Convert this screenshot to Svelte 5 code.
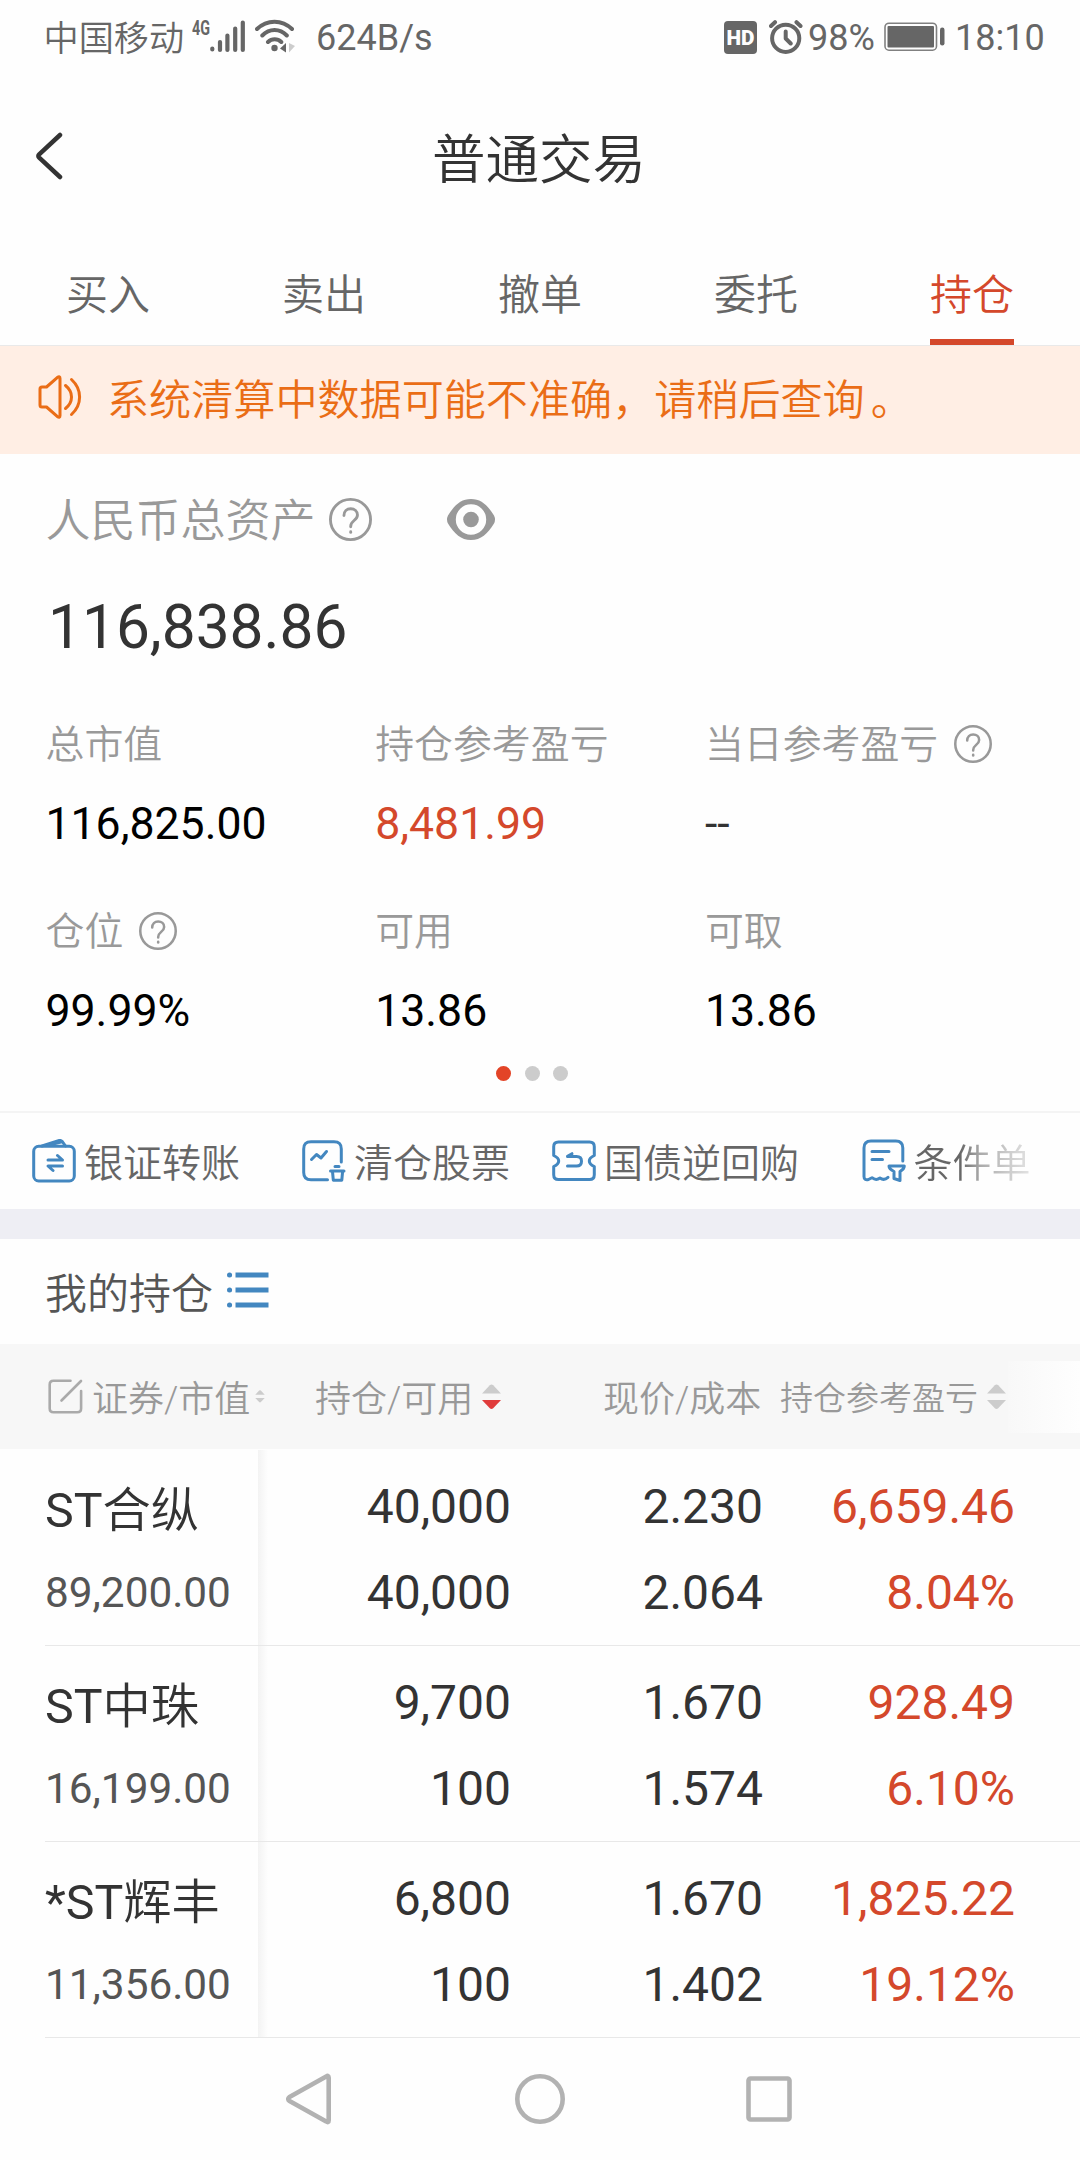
<script>
  const tabs = ['买入', '卖出', '撤单', '委托', '持仓'];
  const activeTab = '持仓';

  const metrics = [
    { label: '总市值', value: '116,825.00' },
    { label: '持仓参考盈亏', value: '8,481.99', tone: 'red' },
    { label: '当日参考盈亏', value: '--', tone: 'muted', help: true },
    { label: '仓位', value: '99.99%', help: true },
    { label: '可用', value: '13.86' },
    { label: '可取', value: '13.86' }
  ];

  const holdings = [
    { mark: 'ST', name: '合纵', worth: '89,200.00', held: '40,000', free: '40,000', price: '2.230', cost: '2.064', gain: '6,659.46', rate: '8.04%' },
    { mark: 'ST', name: '中珠', worth: '16,199.00', held: '9,700', free: '100', price: '1.670', cost: '1.574', gain: '928.49', rate: '6.10%' },
    { mark: '*ST', name: '辉丰', worth: '11,356.00', held: '6,800', free: '100', price: '1.670', cost: '1.402', gain: '1,825.22', rate: '19.12%' }
  ];
</script>

{#snippet help(size)}
  <svg class="help" width={size} height={size} viewBox="0 0 42 42">
    <circle cx="21" cy="21" r="19.6" />
    <path d="M14.6 17.2c0-4.2 2.8-6.7 6.6-6.7s6.6 2.5 6.6 6c0 5.4-6.6 5.6-6.6 11v.6" />
    <path d="M21.2 33v.6" />
  </svg>
{/snippet}

{#snippet sorter(kind)}
  <svg class="sorter {kind}" viewBox="0 0 19 26">
    <path d="M0 9.5 7.8 1.2q1.700-1.600 3.400 0L19 9.5z" />
    <path class="down" d="M0 16h19l-7.800 8.200q-1.700 1.600-3.400 0z" />
  </svg>
{/snippet}

<div class="screen">
  <div class="status">
    <span class="carrier">中国移动</span>
    <svg class="signal" width="54" height="36" viewBox="0 0 54 36">
      <text x="0" y="15.500" textLength="18" lengthAdjust="spacingAndGlyphs">4G</text>
      <path d="M20.300 31.500v-1M28 32V24M35.400 32V17.500M43.200 32V10.500M50.800 32V4.500" transform="translate(0 -1)" />
    </svg>
    <svg class="wifi" width="40" height="36" viewBox="0 0 40 36">
      <path class="arc" d="M2 10C12 .2 27 .2 37 10M7.300 16.500c7-7.200 17.500-7.200 24.500 0M13 23c3.800-3.600 9.500-3.600 13.300 0" />
      <circle cx="19.500" cy="29" r="3.200" />
      <path class="solid" d="M25 29.500 31 24v9.500z" />
      <path class="pale" d="M34 24v9.500l6-6.500z" />
    </svg>
    <span class="speed">624B/s</span>
    <svg class="hd" width="33" height="33" viewBox="0 0 33 33">
      <rect width="33" height="33" rx="4" />
      <text x="2.500" y="24" textLength="28" lengthAdjust="spacingAndGlyphs">HD</text>
    </svg>
    <svg class="alarm" width="34" height="34" viewBox="0 0 34 34">
      <circle cx="16.700" cy="18.300" r="13.600" />
      <path d="M16.700 11.500v7l5 5M2 6l4-3.800M31.500 6l-4-3.800" />
    </svg>
    <span class="charge">98%</span>
    <svg class="battery" width="61" height="30" viewBox="0 0 61 30">
      <rect class="shell" x="1" y="1.200" width="51.500" height="27" rx="4" />
      <rect x="3.500" y="4" width="46.500" height="21.500" rx="1" />
      <rect x="56" y="5.500" width="4.500" height="18" rx="2.200" />
    </svg>
    <span class="clock">18:10</span>
  </div>

  <header>
    <svg class="back" width="28" height="50" viewBox="0 0 28 50">
      <path d="M25 4 4.200 23.300q-1.700 1.700 0 3.400L25 46" />
    </svg>
    <h1>普通交易</h1>
  </header>

  <nav class="tabs">
    {#each tabs as tab}
      <div class="tab" class:active={tab === activeTab}><span>{tab}</span></div>
    {/each}
  </nav>

  <div class="notice">
    <svg width="44" height="44" viewBox="0 0 44 44">
      <path d="M2 14q0-2 2-2h4.500L19.500 2.300q2.500-1.600 2.500 1.200v37q0 2.800-2.500 1.200L8.500 32H4q-2 0-2-2z" />
      <path d="M27.500 10.500c8 6.500 8 16.500 0 23M33.500 4.500c10.800 10 10.800 25 0 35" />
    </svg>
    <span class="message">系统清算中数据可能不准确，请稍后查询<span class="stop">。</span></span>
  </div>

  <section class="summary">
    <div class="caption">
      <span>人民币总资产</span>
      {@render help(43)}
      <svg class="eye" width="48" height="41" viewBox="0 0 48 41">
        <path fill-rule="evenodd" d="M24 0C34 0 40.500 6 47 16.500q2 4 0 8C40.500 35 34 41 24 41S7.500 35 1 24.500q-2-4 0-8C7.500 6 14 0 24 0zM24 5.300a15.200 15.200 0 1 0 0 30.400a15.200 15.200 0 1 0 0-30.400z" />
        <circle cx="24" cy="20.500" r="7.800" />
      </svg>
    </div>
    <div class="total">116,838.86</div>
    <div class="metrics">
      {#each metrics as m}
        <div class="metric">
          <div class="label"><span>{m.label}</span>{#if m.help}{@render help(38)}{/if}</div>
          <div class="value {m.tone ?? ''}">{m.value}</div>
        </div>
      {/each}
    </div>
    <div class="pager"><i class="on"></i><i></i><i></i></div>
  </section>

  <div class="actions">
    <div class="action">
      <svg width="44" height="44" viewBox="0 0 44 44">
        <rect x="1.700" y="7.300" width="40.600" height="34.700" rx="5" />
        <path d="M10 7 26.500 1.600q2.500-.7 4 1.200L33.500 7M15 6.500 29 3M16 21H30.500l-5-4.500M30.500 27H16l5 4.500" />
      </svg>
      <span>银证转账</span>
    </div>
    <div class="action">
      <svg width="44" height="44" viewBox="0 0 44 44">
        <path d="M39.300 23V10q0-7.300-7.300-7.300H9q-7.300 0-7.300 7.300v23.500q0 7.300 7.300 7.300h16.500M9.500 20.500l5-5 4.500 3.500 5.500-6.500M33 27.500h4M28.500 32h13.500M30.500 32.500l.8 8.700h8.500l.8-8.700" />
      </svg>
      <span>清仓股票</span>
    </div>
    <div class="action">
      <svg width="44" height="44" viewBox="0 0 44 44">
        <path d="M6.500 3h31q4.800 0 4.800 4.800v8.700q-5 2.300-5 5.500t5 5.500v8.200q0 4.800-4.800 4.800h-31q-4.800 0-4.800-4.800v-8.200q5-2.300 5-5.500t-5-5.500V7.800Q1.700 3 6.500 3zM15.500 27h9q5 0 5-4.800t-5-4.800h-9l4.500-2.700" />
      </svg>
      <span>国债逆回购</span>
    </div>
    <div class="action">
      <svg width="44" height="44" viewBox="0 0 44 44">
        <path d="M40.800 22V9q0-7-7-7H9Q2 2 2 9v28.500q0 4 4.500 3 2-1 3.500-1.800 4 3.300 8 .3 4 3 8-.7M10 12.500h17M10 20.500h10.500M27 27h15.300q0 3-4.300 5.500v9l-6-2v-7q-5-2.500-5-5.500z" />
      </svg>
      <span>条件单</span>
    </div>
  </div>

  <div class="band"></div>

  <div class="heading">
    <span>我的持仓</span>
    <svg width="42" height="36" viewBox="0 0 42 36">
      <path d="M8.500 3h33M8.500 18h33M8.500 33h33" />
      <path class="bullets" d="M2.500 3h.1M2.500 18h.1M2.500 33h.1" />
    </svg>
  </div>

  <div class="columns">
    <div class="col">
      <svg class="edit" width="35" height="35" viewBox="0 0 35 35">
        <path d="M22.500 1.800H5.500q-3.800 0-3.800 3.800v23.800q0 3.800 3.800 3.800h23.800q3.800 0 3.800-3.800V12M13.500 21.500 33 2" />
      </svg>
      <span>证券/市值</span>
      {@render sorter('tiny')}
    </div>
    <div class="col"><span>持仓/可用</span>{@render sorter('desc')}</div>
    <div class="col"><span>现价/成本</span></div>
    <div class="col small"><span>持仓参考盈亏</span>{@render sorter('none')}</div>
    <div class="more"></div>
  </div>

  <div class="rows">
    {#each holdings as h}
      <div class="row">
        <div class="stock"><b><span>{h.mark}</span>{h.name}</b><small>{h.worth}</small></div>
        <div class="pair"><span>{h.held}</span><span>{h.free}</span></div>
        <div class="pair"><span>{h.price}</span><span>{h.cost}</span></div>
        <div class="pair red"><span>{h.gain}</span><span>{h.rate}</span></div>
      </div>
    {/each}
  </div>

  <div class="keys">
    <svg width="50" height="52" viewBox="0 0 50 52">
      <path d="M42.700 4.800v42.400q0 3-2.500 1.200L3.500 28q-2.500-2 0-4L40.200 3.600q2.500-1.800 2.500 1.200z" />
    </svg>
    <svg width="50" height="52" viewBox="0 0 50 52"><circle cx="25" cy="26" r="22.700" /></svg>
    <svg width="50" height="52" viewBox="0 0 50 52"><rect x="4.500" y="5.500" width="41" height="41" rx="2" /></svg>
  </div>
</div>

<style>
  :global(body) {
    background: #fefefe;
  }
  .screen {
    width: 1080px;
    height: 2160px;
    overflow: hidden;
    background: #fefefe;
    font-family: Roboto, 'Noto Sans CJK SC', sans-serif;
    color: #333;
    display: flex;
    flex-direction: column;
    white-space: nowrap;
  }
  svg {
    flex: none;
    display: block;
    fill: none;
    stroke-linecap: round;
    stroke-linejoin: round;
  }

  .carrier, h1, .tab, .notice, .caption, .label, .action, .heading, .columns {
    font-weight: 350;
  }

  .status {
    height: 74px;
    display: flex;
    align-items: center;
    padding-left: 43.500px;
    font-size: 36px;
    color: #666;
  }
  .carrier { font-size: 35.200px; width: 148.500px; padding-bottom: 4px; }
  .signal { stroke: #666; stroke-width: 4.200; overflow: visible; }
  .signal text { fill: #666; stroke: none; font-size: 21px; font-weight: 700; }
  .wifi { margin-left: 9px; fill: #666; }
  .wifi .arc { fill: none; stroke: #666; stroke-width: 4; }
  .wifi .pale { fill: #ccc; }
  .speed { margin-left: 21px; width: 408px; }
  .speed, .charge, .clock { padding-top: 1px; }
  .hd { fill: #666; }
  .hd text { fill: #fefefe; font-size: 21px; font-weight: 900; }
  .alarm { margin-left: 12px; stroke: #666; stroke-width: 4; }
  .charge { margin-left: 5px; width: 76px; }
  .battery { fill: #666; }
  .battery .shell { fill: none; stroke: #808080; stroke-width: 1.600; }
  .clock { margin-left: 10px; }

  header {
    height: 168px;
    display: grid;
    grid-template-columns: 35px 28px 1fr 65px;
    align-items: center;
  }
  .back { grid-column: 2; margin-bottom: 4px; stroke: #333; stroke-width: 4.500; }
  h1 { margin: 0; padding-top: 5px; font-size: 53.500px; text-align: center; line-height: 60px; }

  .tabs {
    height: 103px;
    display: grid;
    grid-template-columns: repeat(5, 1fr);
    justify-items: center;
    border-bottom: 1px solid #e9e9e9;
    font-size: 42px;
    color: #666;
  }
  .tab {
    box-sizing: border-box;
    height: 103px;
    line-height: 108px;
  }
  .tab.active { color: #d4482b; border-bottom: 6px solid #d4482b; }

  .notice {
    box-sizing: border-box;
    height: 108px;
    display: flex;
    align-items: center;
    gap: 25px;
    padding: 0 0 6px 38px;
    background: #ffeee4;
    color: #ea6d16;
    font-size: 42.100px;
  }
  .notice svg { stroke: #ea6d16; stroke-width: 3; }
  .message { padding-bottom: 2px; }
  .stop { margin-left: 6px; }

  .summary {
    height: 657px;
    border-bottom: 2px solid #f4f4f4;
  }
  .caption {
    height: 131px;
    display: flex;
    align-items: center;
    padding-left: 45.500px;
    font-size: 45px;
    color: #999;
  }
  .caption span { padding-bottom: 4px; }
  .help { stroke: #999; stroke-width: 2.800; }
  .caption .help { margin-left: 13.500px; }
  .eye { margin-left: 74.500px; fill: #999; }
  .total {
    height: 84px;
    line-height: 86px;
    padding-left: 48px;
    font-size: 60.400px;
  }
  .metrics {
    display: grid;
    grid-template-columns: repeat(3, 329.700px);
    grid-auto-rows: 187px;
    padding-left: 45.500px;
  }
  .metric { padding-top: 50px; }
  .label {
    height: 50px;
    display: flex;
    align-items: center;
    gap: 16px;
    font-size: 38.900px;
    color: #999;
  }
  .label span { padding-bottom: 6px; }
  .value {
    margin-top: 25px;
    line-height: 60px;
    font-size: 44.600px;
    color: #000;
  }
  .value.muted { color: #333; }
  .value.red, .red { color: #d4482b; }
  .pager {
    height: 60px;
    display: flex;
    align-items: center;
    gap: 13.500px;
    padding-left: 496px;
  }
  .pager i { width: 15px; height: 15px; border-radius: 50%; background: #ccc; }
  .pager .on { background: #e34427; }

  .actions {
    height: 96px;
    display: grid;
    grid-template-columns: 270px 250px 309.500px 219px;
    align-items: center;
    padding-left: 32px;
    font-size: 39px;
    color: #666;
  }
  .action { display: flex; align-items: center; gap: 8px; }
  .action span { margin-bottom: 2px; }
  .action svg { margin-bottom: 1px; stroke: #4387c0; stroke-width: 3; }
  .action:last-child span {
    background: linear-gradient(90deg, #666 46px, #aaa 66px, #c0c0c0 84px, #e4e4e4 117px);
    background-clip: text;
    color: transparent;
  }
  .band { height: 30px; background: #eeeef4; }

  .heading {
    height: 105px;
    display: flex;
    align-items: center;
    padding-left: 45px;
    gap: 14px;
    font-size: 42px;
    color: #555;
  }
  .heading span { margin-bottom: 2px; }
  .heading svg { margin-bottom: 3px; stroke: #4387c0; stroke-width: 5; stroke-linecap: butt; }
  .heading .bullets { stroke-linecap: round; }

  .columns {
    height: 105px;
    display: grid;
    grid-template-columns: 267px 288px 177px 228px 72px;
    align-items: center;
    padding-left: 48px;
    background: #f7f7f7;
    font-size: 36px;
    color: #999;
  }
  .col { display: flex; align-items: center; }
  .col span { margin-bottom: 2px; }
  .edit { margin-right: 9px; stroke: #aaa; stroke-width: 2.600; }
  .small { font-size: 33px; }
  .sorter { width: 19px; height: 26px; margin-left: 9px; fill: #ccc; }
  .sorter.tiny { width: 10px; height: 13px; margin-left: 5px; }
  .sorter.desc .down { fill: #e03c3c; }
  .more { height: 72px; background: linear-gradient(90deg, #f8f8f8, #fefefe); }

  .rows { padding-top: 1px; }
  .row {
    height: 195px;
    display: grid;
    grid-template-columns: 213px 253px 252px 252px;
    margin-left: 45px;
    border-bottom: 1px solid #e8e8e8;
  }
  .stock, .pair {
    display: flex;
    flex-direction: column;
    padding-top: 18px;
  }
  .stock b { font-size: 48.300px; font-weight: 350; line-height: 86px; }
  .stock b span { font-weight: 400; }
  .stock small { font-size: 42.300px; line-height: 77px; color: #555; }
  .pair {
    padding-top: 14px;
    align-items: flex-end;
    font-size: 48px;
    line-height: 86px;
  }
  .stock + .pair { background: linear-gradient(90deg, #f3f3f3, #fefefe 10px); }

  .keys {
    flex: 1;
    display: flex;
    gap: 179px;
    padding: 35px 0 0 286px;
  }
  .keys svg { stroke: #b2b2b2; stroke-width: 4.600; }
</style>
